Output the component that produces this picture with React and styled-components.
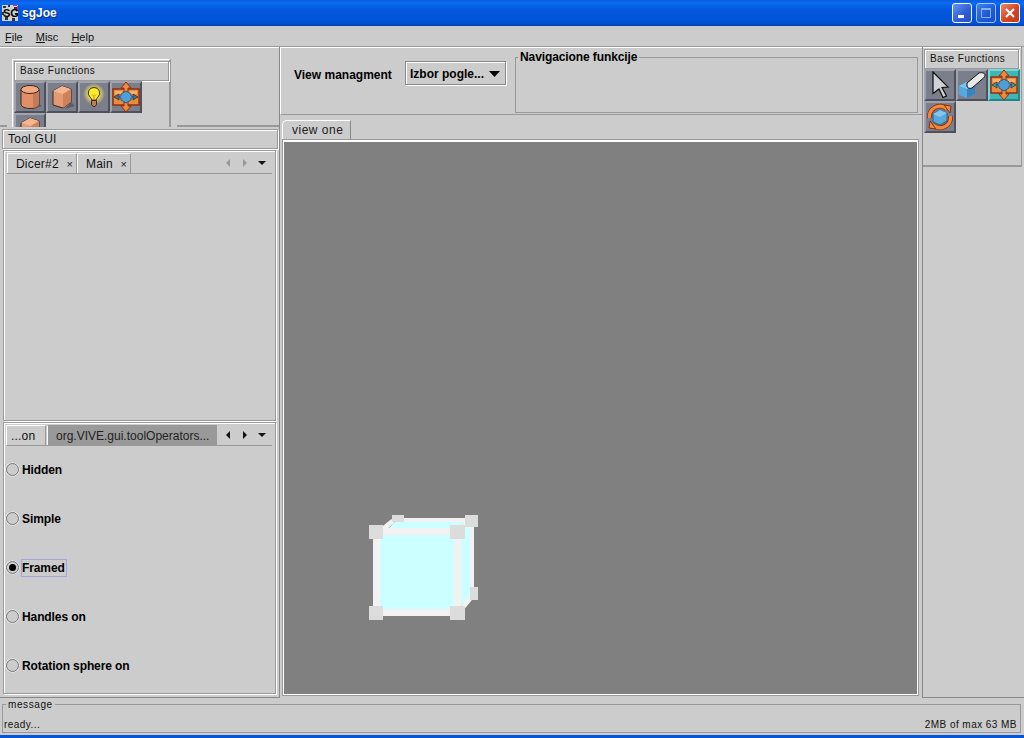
import React from "react";
import styled, { createGlobalStyle } from "styled-components";

const Global = createGlobalStyle`
  html, body { margin: 0; padding: 0; background: #cccccc; }
  * { box-sizing: border-box; }
  body { font-family: "Liberation Sans", Arial, sans-serif; font-size: 12px; color: #000; }
`;

const Window = styled.div`
  width: 1024px;
  height: 738px;
  overflow: hidden;
  display: grid;
  grid-template-rows: 26px 21px 1fr 37px 3px;
  background: #cccccc;
`;

const TitleBar = styled.div`
  display: flex;
  align-items: center;
  padding: 0 4px 0 2px;
  gap: 4px;
  background: linear-gradient(180deg, #0a5ce0 0%, #0a6cf2 12%, #0258dc 35%, #0254d8 75%, #0250d0 90%, #0240b0 100%);
`;

const TitleText = styled.span`
  flex: 1;
  color: #fff;
  font-size: 12px;
  font-weight: bold;
  text-shadow: 1px 1px 0 #0a2f8f;
`;

const WinButton = styled.div`
  width: 20px;
  height: 20px;
  border: 1px solid #fff;
  border-radius: 3px;
  display: flex;
  align-items: center;
  justify-content: center;
  background: ${(p) => (p.$close ? "linear-gradient(135deg, #e98a70, #d5451f 55%, #c23a18)" : "linear-gradient(135deg, #6c93ee, #2f5fd8 55%, #2550c8)")};
  opacity: ${(p) => (p.$dim ? 0.62 : 1)};
`;

const MenuBar = styled.div`
  display: flex;
  align-items: center;
  gap: 13px;
  padding-left: 5px;
  font-size: 11px;
  padding-top: 1px;
  background: #cccccc;
  color: #111;
  border-bottom: 1px solid #999;
  u { text-underline-offset: 1px; }
`;

const Main = styled.div`
  display: grid;
  grid-template-columns: 280px 642px 102px;
  min-height: 0;
`;

const LeftColumn = styled.div`
  display: flex;
  flex-direction: column;
  min-height: 0;
  padding-bottom: 3px;
  border-right: 1px solid #888;
  border-bottom: 1px solid #888;
  box-shadow: inset 0 1px 0 #fff;
`;

const ToolbarDock = styled.div`
  height: 80px;
  overflow: hidden;
  padding: 12px 0 0 12px;
  flex: none;
  background: linear-gradient(#999, #999) bottom / 100% 2px no-repeat;
`;

const Toolbar = styled.div`
  width: ${(p) => p.$width}px;
  padding: 1px 1px 0;
  border-top: 1px solid #fff;
  border-left: 1px solid #fff;
  border-right: 2px solid #999;
  display: grid;
  grid-template-columns: repeat(${(p) => p.$cols}, 32px);
  background: #cccccc;
  box-shadow: -5px 0 0 #ccc, 6px 0 0 #ccc;
`;

const ToolbarTitle = styled.div`
  grid-column: 1 / -1;
  height: 20px;
  line-height: 18px;
  padding-left: 5px;
  font-size: 10px;
  letter-spacing: 0.45px;
  color: #111;
  border: 1px solid #999;
  box-shadow: 1px 1px 0 #fff, inset 1px 1px 0 #fff;
  width: ${(p) => p.$width}px;
`;

const IconButton = styled.div`
  width: 32px;
  height: 32px;
  background: ${(p) => (p.$active ? "#3fb6b8" : "#7b7f8c")};
  border-top: 2px solid ${(p) => (p.$active ? "#7ad6d6" : "#a0a3ae")};
  border-left: 2px solid ${(p) => (p.$active ? "#7ad6d6" : "#a0a3ae")};
  border-right: 2px solid ${(p) => (p.$active ? "#20888c" : "#4e515c")};
  border-bottom: 2px solid ${(p) => (p.$active ? "#20888c" : "#4e515c")};
  display: flex;
  align-items: center;
  justify-content: center;
  overflow: visible;
  svg { flex: none; display: block; }
`;

const ToolGuiTitle = styled.div`
  flex: none;
  height: 20px;
  margin: 2px 1px 0 2px;
  padding-left: 5px;
  line-height: 19px;
  letter-spacing: 0.25px;
  color: #111;
  border: 1px solid #999;
  box-shadow: inset 1px 1px 0 #fff, 1px 1px 0 #fff;
`;

const TabPanel = styled.div`
  flex: ${(p) => (p.$height ? "none" : 1)};
  height: ${(p) => (p.$height ? `${p.$height}px` : "auto")};
  min-height: 0;
  margin: 1px 3px 0 3px;
  padding: 2px 3px;
  border: 1px solid #999;
  box-shadow: inset 1px 1px 0 #fff, 1px 1px 0 #fff;
  display: flex;
  flex-direction: column;
`;

const TabStrip = styled.div`
  flex: none;
  height: 21px;
  display: flex;
  align-items: stretch;
  border-bottom: 1px solid #999;
`;

const Tab = styled.div`
  width: ${(p) => p.$width}px;
  display: flex;
  align-items: center;
  padding-left: ${(p) => p.$pad || 8}px;
  letter-spacing: ${(p) => (p.$selected ? 0 : 0.2)}px;
  color: ${(p) => (p.$selected ? "#222" : "#111")};
  background: ${(p) => (p.$selected ? "#999999" : "#cccccc")};
  border-left: 1px solid #fff;
  border-top: 1px solid ${(p) => (p.$selected ? "#999" : "#fff")};
  border-right: 1px solid #999;
  margin-left: ${(p) => p.$left || 0}px;
  margin-right: ${(p) => p.$gap || 0}px;
  white-space: nowrap;
`;

const TabClose = styled.span`
  margin-left: auto;
  margin-right: 3px;
  font-size: 11px;
  color: #222;
`;

const TabArrows = styled.div`
  margin-left: auto;
  width: 42px;
  margin-right: 6px;
  display: flex;
  align-items: center;
  justify-content: space-between;
`;

const Arrow = styled.svg`
  width: 8px;
  height: 8px;
  fill: ${(p) => (p.$dim ? "#999" : "#111")};
`;

const RadioList = styled.div`
  flex: 1;
  display: flex;
  flex-direction: column;
  margin: -1px 0 0 -1px;
`;

const RadioRow = styled.div`
  display: flex;
  align-items: center;
  gap: 3px;
  height: 49px;
  flex: none;
  font-weight: bold;
  letter-spacing: -0.1px;
`;

const RadioDot = styled.span`
  width: 13px;
  height: 13px;
  flex: none;
  border-radius: 50%;
  border: 1px solid #777;
  box-shadow: 0 0 0 0.5px #fff, inset 0 0 0 1px #ccc;
  display: flex;
  align-items: center;
  justify-content: center;
  &::after {
    content: "";
    width: 7px;
    height: 7px;
    border-radius: 50%;
    background: ${(p) => (p.$on ? "#000" : "transparent")};
  }
`;

const RadioLabel = styled.span`
  padding: 1px 1px 1px 0;
  border: 1px solid ${(p) => (p.$focus ? "#a3a3dd" : "transparent")};
  margin-left: -1px;
`;

const Center = styled.div`
  display: flex;
  flex-direction: column;
  min-height: 0;
`;

const NavPanel = styled.div`
  flex: none;
  height: 68px;
  display: flex;
  align-items: flex-start;
  border-top: 1px solid #fff;
  border-left: 1px solid #fff;
  border-bottom: 1px solid #999;
  padding: 9px 4px 0 13px;
`;

const NavLabel = styled.span`
  font-weight: bold;
  margin-top: 11px;
  width: 111px;
  flex: none;
`;

const Combo = styled.div`
  flex: none;
  width: 101px;
  height: 24px;
  margin-top: 4px;
  padding: 1px 5px 0 4px;
  display: flex;
  align-items: center;
  justify-content: space-between;
  font-weight: bold;
  border: 1px solid #888;
  box-shadow: inset 1px 1px 0 #fff, 1px 1px 0 #fff;
`;

const Fieldset = styled.fieldset`
  margin: 0;
  padding: 0;
  min-width: 0;
  border: 1px solid #999;
  border-radius: 0;
  flex: ${(p) => (p.$grow ? 1 : "none")};
`;

const NavFieldset = styled(Fieldset)`
  margin-left: 9px;
  margin-top: -7px;
  height: 63px;
  legend {
    font-weight: bold;
    padding: 0 2px;
    margin-left: 2px;
    line-height: 14px;
    letter-spacing: -0.1px;
  }
`;

const ViewTabs = styled.div`
  flex: 1;
  min-height: 0;
  display: flex;
  flex-direction: column;
  padding: 5px 2px 2px 2px;
`;

const ViewTab = styled.div`
  flex: none;
  width: 69px;
  height: 19px;
  padding-left: 9px;
  line-height: 18px;
  letter-spacing: 0.5px;
  color: #222;
  border-top: 1px solid #fff;
  border-left: 1px solid #fff;
  border-right: 1px solid #888;
  border-top-left-radius: 5px;
`;

const Viewport = styled.div`
  flex: 1;
  min-height: 0;
  border-top: 3px solid #fff;
  border-left: 2px solid #fff;
  border-right: 2px solid #fff;
  border-bottom: 2px solid #fff;
  outline: 1px solid #999;
  outline-offset: -1px;
  background: #808080;
  margin-right: 1px;
  svg { display: block; width: 100%; height: 100%; }
`;

const RightColumn = styled.div`
  border-left: 1px solid #888;
  border-bottom: 1px solid #888;
`;

const RightDock = styled.div`
  height: 120px;
  margin-right: 2px;
  padding: 2px 0 0 1px;
  border-bottom: 2px solid #999;
  border-right: 1px solid #999;
  box-shadow: inset 0 1px 0 #fff;
`;

const RightBar = styled.div`
  display: grid;
  grid-template-columns: repeat(3, 32px);
`;

const StatusArea = styled.div`
  padding: 0 3px 2px 2px;
`;

const StatusFieldset = styled(Fieldset)`
  height: 35px;
  display: flex;
  legend {
    font-size: 10px;
    letter-spacing: 0.6px;
    padding: 0 2px;
    margin-left: 3px;
    line-height: 13px;
    color: #111;
  }
`;

const StatusRow = styled.div`
  display: flex;
  justify-content: space-between;
  width: 100%;
  padding: 8px 3px 0 1px;
  font-size: 10px;
  letter-spacing: 0.45px;
  color: #111;
`;

const BottomEdge = styled.div`
  background: #0554dc;
`;

const Cylinder = () => (
  <svg width="28" height="28" viewBox="0 0 28 28">
    <path d="M16 27l10-4-4-3z" fill="#5a5d68" />
    <path d="M5 7v14c0 2.500 4 4.500 9 4.500s9-2 9-4.500V7z" fill="#e08f66" stroke="#3d2518" />
    <path d="M17 25V8h6v13c0 2-3 4-6 4z" fill="#c47a54" />
    <ellipse cx="14" cy="6.500" rx="9" ry="4" fill="#f0a880" stroke="#3d2518" />
  </svg>
);

const Cube = () => (
  <svg width="28" height="28" viewBox="0 0 28 28">
    <path d="M17 26l10-3-4-4z" fill="#5a5d68" />
    <path d="M14 3l9 3v13l-8 6-10-3V8z" fill="#e29a72" stroke="#3d2518" />
    <path d="M5 8l10 3 8-5-9-3z" fill="#f2b692" />
    <path d="M15 11v14l8-6V6z" fill="#cf8258" />
  </svg>
);

const Bulb = () => (
  <svg width="28" height="28" viewBox="0 0 28 28">
    <defs>
      <radialGradient id="glow">
        <stop offset="0.4" stopColor="#f4e860" />
        <stop offset="1" stopColor="#7b7f8c" />
      </radialGradient>
    </defs>
    <circle cx="14" cy="11" r="11" fill="url(#glow)" />
    <path d="M14 4.500a5.500 5.500 0 0 0-4 9.500c1 1 1.500 2 1.500 3h5c0-1 .5-2 1.500-3a5.500 5.500 0 0 0-4-9.500z" fill="#ffec2a" stroke="#3a2c10" />
    <path d="M11.500 17.500h5v4l-1.500 2h-2l-1.500-2z" fill="#c08050" stroke="#3a2c10" />
    <path d="M12 11.500l2 2 2-2M14 13.500V17" stroke="#d08a20" fill="none" />
  </svg>
);

const MoveArrows = ({ notch = "#5f6672" }) => (
  <svg width="30" height="30" viewBox="0 0 30 30">
    <path d="M2 7h12v16H2zM16 7h12v16H16z" fill="#e98c3e" stroke="#8f2f10" strokeWidth="1.500" />
    <path d="M4 9h7v3H4zM19 9h7v3h-7z" fill="#f6b06a" />
    <path d="M15 0l5 6h-3v4h-4V6h-3zM15 30l5-6h-3v-4h-4v4h-3z" fill="#ee8b3e" stroke="#8f2f10" />
    <path d="M3 15l5-3v6zM27 15l-5-3v6z" fill={notch} stroke="#333" strokeWidth="0.800" />
    <path d="M15 9l5 3v2l3 1-3 1v2l-5 3-5-3v-2l-3-1 3-1v-2z" fill="#4f9fd6" stroke="#2f5f85" />
  </svg>
);

const Pointer = () => (
  <svg width="28" height="28" viewBox="0 0 28 28">
    <path d="M7 1l15 15-6 .5 4.500 8.500-3.500 1.500-4-8.500-6 4.500z" fill="#cfd2d8" stroke="#0c0c0c" strokeWidth="1.200" />
  </svg>
);

const Eraser = () => (
  <svg width="28" height="28" viewBox="0 0 28 28">
    <path d="M1 15l8-4 8 3v9l-8 4-8-3z" fill="#55a8e0" />
    <path d="M9 18l8-4v9l-8 4z" fill="#3783bd" />
    <path d="M1 15l8 3 8-4-8-3z" fill="#7cc4f0" />
    <path d="M9 12L21 2c2-1 6 0 6 2 0 1-.5 2-1.500 3L14 17c-2 1-5 0-5-2z" fill="#e8e8e8" stroke="#0c0c0c" />
  </svg>
);

const Rotate = () => (
  <svg width="28" height="28" viewBox="0 0 28 28">
    <path d="M7 11l7-4 7 3v8l-7 4-7-3z" fill="#58a8dc" stroke="#2f5f85" />
    <path d="M7 11l7 3 7-4-7-3z" fill="#84c6ee" />
    <g fill="none" strokeLinecap="butt">
      <path d="M3.500 15A10.500 10.500 0 0 1 21 6" stroke="#8f2f10" strokeWidth="5" />
      <path d="M24.500 13A10.500 10.500 0 0 1 7 22" stroke="#8f2f10" strokeWidth="5" />
      <path d="M3.500 15A10.500 10.500 0 0 1 21 6" stroke="#ee8b3e" strokeWidth="3.200" />
      <path d="M24.500 13A10.500 10.500 0 0 1 7 22" stroke="#ee8b3e" strokeWidth="3.200" />
    </g>
    <path d="M18 2l7 1-1 7zM10 26l-7-1 1-7z" fill="#ee8b3e" stroke="#8f2f10" />
  </svg>
);

const LeftArrow = ({ dim }) => (
  <Arrow $dim={dim} viewBox="0 0 8 8"><path d="M6 0v8L2 4z" /></Arrow>
);
const RightArrow = ({ dim }) => (
  <Arrow $dim={dim} viewBox="0 0 8 8"><path d="M2 0v8l4-4z" /></Arrow>
);
const DownArrow = () => (
  <Arrow viewBox="0 0 8 8"><path d="M0 2h8L4 6z" /></Arrow>
);

// viewBox is in page pixels so the cube can be read straight off the reference
const Scene = () => (
  <svg viewBox="284 142 633 552" preserveAspectRatio="xMinYMin meet">
    <path d="M380 535v74h74V535zM395 522h70l-6 6h-70zM461 527l9-5v74l-9 10z" fill="#ccffff" />
    <g stroke="#f2f2f2" fill="none">
      <path d="M376.500 530v80M382 531.500h70M457.500 530v80M382 612.500h70" strokeWidth="7" />
      <path d="M400 520h66M472 526v62" strokeWidth="4" />
      <path d="M382 530l11-9M462 529l6-8M463 607l9-11" strokeWidth="5" />
    </g>
    <g fill="#dcdcdc">
      <path d="M392 515h12v7h-12zM465 515h13v12h-13zM470 587h8v13h-8z" />
      <path d="M369 525h14v14h-14zM450 525h15v14h-15zM369 606h14v14h-14zM450 606h15v14h-15z" />
    </g>
  </svg>
);

const SgLogo = () => (
  <svg width="16" height="16" viewBox="0 0 16 16">
    <rect width="16" height="16" fill="#d0d0d0" />
    <path d="M1 1h3v2H1zM6 0h2v2H6zM12 2h3v3h-3zM0 7h2v3H0zM3 12h3v3H3zM10 13h3v3h-3zM13 8h3v2h-3z" fill="#333" />
    <path d="M11 0h4v1h-4zM15 1h1v5h-1z" fill="#e01fb0" />
    <text x="1" y="12" fontSize="11" fontWeight="bold" fontFamily="Liberation Sans" fill="#000">SG</text>
  </svg>
);

const App = () => (
  <Window>
    <Global />
    <TitleBar>
      <SgLogo />
      <TitleText>sgJoe</TitleText>
      <WinButton>
        <svg width="12" height="12" viewBox="0 0 12 12"><rect x="2" y="8" width="6" height="3" fill="#fff" /></svg>
      </WinButton>
      <WinButton $dim>
        <svg width="12" height="12" viewBox="0 0 12 12"><path d="M1.500 2.500h9v8h-9z" fill="none" stroke="#dfe6fa" /><rect x="1" y="1" width="10" height="2" fill="#dfe6fa" /></svg>
      </WinButton>
      <WinButton $close>
        <svg width="12" height="12" viewBox="0 0 12 12"><path d="M2 2l8 8M10 2l-8 8" stroke="#fff" strokeWidth="2.200" /></svg>
      </WinButton>
    </TitleBar>
    <MenuBar>
      <span><u>F</u>ile</span>
      <span><u>M</u>isc</span>
      <span><u>H</u>elp</span>
    </MenuBar>
    <Main>
      <LeftColumn>
        <ToolbarDock>
          <Toolbar $width={159} $cols={4}>
            <ToolbarTitle $width={155}>Base Functions</ToolbarTitle>
            <IconButton><Cylinder /></IconButton>
            <IconButton><Cube /></IconButton>
            <IconButton><Bulb /></IconButton>
            <IconButton><MoveArrows /></IconButton>
            <IconButton><Cube /></IconButton>
          </Toolbar>
        </ToolbarDock>
        <ToolGuiTitle>Tool GUI</ToolGuiTitle>
        <TabPanel $height={271}>
          <TabStrip>
            <Tab $width={70}>Dicer#2<TabClose>×</TabClose></Tab>
            <Tab $width={54} $pad={8}>Main<TabClose>×</TabClose></Tab>
            <TabArrows><LeftArrow dim /><RightArrow dim /><DownArrow /></TabArrows>
          </TabStrip>
        </TabPanel>
        <TabPanel>
          <TabStrip>
            <Tab $width={40} $pad={4} $gap={1} $left={-1}>...on</Tab>
            <Tab $width={170} $selected>org.VIVE.gui.toolOperators...</Tab>
            <TabArrows><LeftArrow /><RightArrow /><DownArrow /></TabArrows>
          </TabStrip>
          <RadioList>
            <RadioRow><RadioDot /><RadioLabel>Hidden</RadioLabel></RadioRow>
            <RadioRow><RadioDot /><RadioLabel>Simple</RadioLabel></RadioRow>
            <RadioRow><RadioDot $on /><RadioLabel $focus>Framed</RadioLabel></RadioRow>
            <RadioRow><RadioDot /><RadioLabel>Handles on</RadioLabel></RadioRow>
            <RadioRow><RadioDot /><RadioLabel>Rotation sphere on</RadioLabel></RadioRow>
          </RadioList>
        </TabPanel>
      </LeftColumn>
      <Center>
        <NavPanel>
          <NavLabel>View managment</NavLabel>
          <Combo>
            Izbor pogle...
            <svg width="11" height="6" viewBox="0 0 11 6"><path d="M0 0h11L5.500 6z" /></svg>
          </Combo>
          <NavFieldset $grow>
            <legend>Navigacione funkcije</legend>
          </NavFieldset>
        </NavPanel>
        <ViewTabs>
          <ViewTab>view one</ViewTab>
          <Viewport><Scene /></Viewport>
        </ViewTabs>
      </Center>
      <RightColumn>
        <RightDock>
          <ToolbarTitle $width={95}>Base Functions</ToolbarTitle>
          <RightBar>
            <IconButton><Pointer /></IconButton>
            <IconButton><Eraser /></IconButton>
            <IconButton $active><MoveArrows notch="#2f9ea2" /></IconButton>
            <IconButton><Rotate /></IconButton>
          </RightBar>
        </RightDock>
      </RightColumn>
    </Main>
    <StatusArea>
      <StatusFieldset>
        <legend>message</legend>
        <StatusRow>
          <span>ready...</span>
          <span>2MB of max 63 MB</span>
        </StatusRow>
      </StatusFieldset>
    </StatusArea>
    <BottomEdge />
  </Window>
);

export default App;
